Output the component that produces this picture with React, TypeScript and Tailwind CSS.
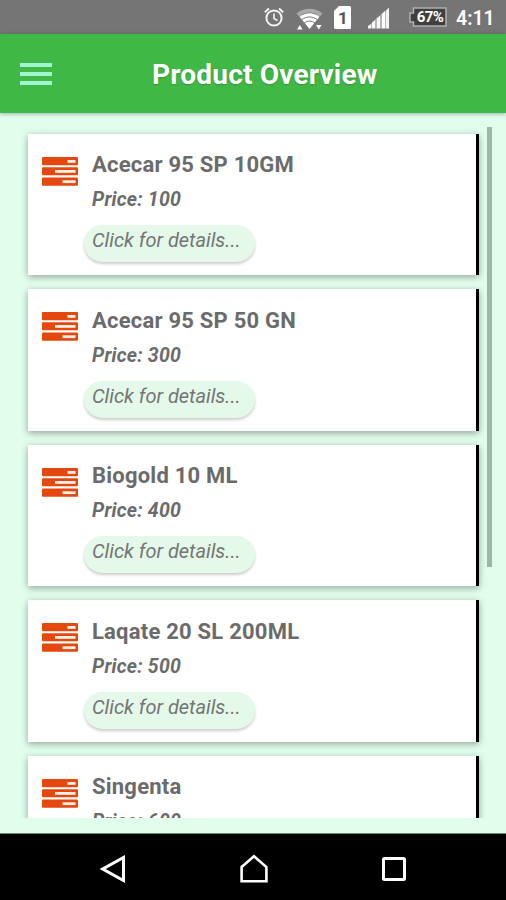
import React from "react";

interface Product {
  name: string;
  price: number;
}

const products: Product[] = [
  { name: "Acecar 95 SP 10GM", price: 100 },
  { name: "Acecar 95 SP 50 GN", price: 300 },
  { name: "Biogold 10 ML", price: 400 },
  { name: "Laqate 20 SL 200ML", price: 500 },
  { name: "Singenta", price: 600 },
];

function StatusBar() {
  return (
    <div className="flex h-[34px] shrink-0 items-center bg-[#757575] pl-[263px] text-white">
      {/* Alarm */}
      <svg className="h-[22px] w-[22px] shrink-0" viewBox="0 0 22 22" fill="none" stroke="#f4f4f4">
        <circle cx="11" cy="12" r="7.6" strokeWidth="2" />
        <path d="M11 7.5v5l3.5 2" strokeWidth="1.6" />
        <path d="M1.8 6.2 6 2.6M20.2 6.2 16 2.6" strokeWidth="2" />
      </svg>
      {/* Wifi */}
      <svg className="mt-[3px] ml-[11px] h-6 w-[27px] shrink-0" viewBox="0 0 27 24" fill="none">
        <path d="M.5 6.5C8 .3 19 .3 26.5 6.5L24 9.5C17.5 4 9.5 4 3 9.5Z" fill="#a9a9a9" />
        <path d="M3.5 9.8C9.5 5 17.5 5 23.5 9.8L13.5 22Z" fill="#fff" />
        <path d="M5.5 12.8C10.5 9 16.5 9 21.5 12.8M8 16C11.5 13.5 15.5 13.5 19 16" stroke="#757575" strokeWidth="1" />
        <path d="M1 22.5 3.8 18 6.6 22.5ZM20 18h5.6l-2.8 4.5Z" fill="#fff" />
      </svg>
      {/* Sim slot */}
      <div className="relative ml-[11px] h-[23px] w-[17px] shrink-0">
        <svg className="h-full w-full" viewBox="0 0 17 23">
          <path d="M5 0h10.5Q17 0 17 1.5v20Q17 23 15.5 23h-14Q0 23 0 21.5V5Z" fill="#fff" />
        </svg>
        <span className="absolute inset-0 pl-px text-center text-[17px] leading-[24px] font-bold text-[#555]">
          1
        </span>
      </div>
      {/* Signal */}
      <svg className="mt-[2px] ml-[17px] h-[22px] w-[22px] shrink-0" viewBox="0 0 22 22">
        <path d="M0 21.5v-2.5L3 17v4.5ZM4 21.5v-6l3-2.5v8.5ZM8.5 21.5v-10l3.5-3v13ZM18 21.5V3.5l3-3v21Z" fill="#f5f5f5" />
        <path d="M13.5 21.5V7l3.5-3v17.5Z" fill="#fff" />
        <path d="M3 21.5V17l1-1v5.5ZM7 21.5v-9l1.5-1v10ZM12 21.5V8.5l1.5-1.5v14.5ZM17 21.5V4l1-.5v18Z" fill="#b5b5b5" />
      </svg>
      {/* Battery */}
      <div className="relative ml-[19px] h-5 w-[38px] shrink-0">
        <svg className="h-full w-full" viewBox="0 0 38 20">
          <path d="M4.5 1H37v18H4.5v-4H1V6h3.5Z" fill="#3f3f3f" stroke="#b0b0b0" strokeWidth="1.5" />
        </svg>
        <span className="absolute inset-0 pl-[4px] text-center text-[15px] leading-5 font-bold tracking-[-0.6px]">
          67%
        </span>
      </div>
      <span className="ml-[9px] pt-[3px] text-[19.5px] leading-none font-semibold">4:11</span>
    </div>
  );
}

function Header() {
  return (
    <header className="z-10 flex h-[79px] shrink-0 items-center bg-[#40b846] pl-5 shadow-[0_1px_4px_rgba(0,0,0,0.3)]">
      <div className="flex w-8 flex-col gap-[5px]">
        <span className="h-1 bg-[#a2f5d0]" />
        <span className="h-1 bg-[#a2f5d0]" />
        <span className="h-1 bg-[#a2f5d0]" />
      </div>
      <h1 className="ml-[100px] pt-[3px] text-[28px] leading-8 font-bold tracking-[0.2px] whitespace-nowrap text-white [text-shadow:0_1px_2px_rgba(0,0,0,0.2)]">
        Product Overview
      </h1>
    </header>
  );
}

function TasksIcon() {
  return (
    <svg className="mt-[23px] h-[29px] w-9 shrink-0" viewBox="0 0 36 29">
      <g fill="#e4480f">
        <rect width="36" height="8.2" rx="1" />
        <rect y="10.3" width="36" height="8" rx="1" />
        <rect y="20.5" width="36" height="8.2" rx="1" />
      </g>
      <g fill="#fff0e6">
        <rect x="25.5" y="3" width="8" height="2.8" />
        <rect x="13" y="13" width="20.5" height="2.8" />
        <rect x="20.5" y="23.3" width="13" height="2.8" />
      </g>
    </svg>
  );
}

function ProductCard({ product }: { product: Product }) {
  return (
    <div className="flex h-[141.5px] shrink-0 border-r-[3px] border-black bg-white pl-[14px] shadow-[0_2px_7px_rgba(0,0,0,0.35)]">
      <TasksIcon />
      <div className="ml-[6px] pt-[18.5px]">
        <h2 className="pl-2 text-[22px] leading-[26px] font-bold tracking-[0.22px] text-[#6b6b6b]">
          {product.name}
        </h2>
        <p className="mt-[10px] pl-2 text-[19.5px] leading-6 font-bold tracking-[0.2px] text-[#6b6b6b] italic">
          Price: {product.price}
        </p>
        <button className="mt-[13px] flex h-[37px] w-[171px] rounded-full bg-[#e4f9e9] pt-[3px] pl-2 text-[20px] leading-6 tracking-[-0.03px] whitespace-nowrap text-[#757575] italic shadow-[0_2px_3px_rgba(0,0,0,0.2)]">
          Click for details...
        </button>
      </div>
    </div>
  );
}

function NavBar() {
  return (
    <nav className="flex h-[67px] shrink-0 items-center justify-between border-t border-[#718078] bg-black pt-[3px] pr-[98px] pl-[100px]">
      <svg className="h-7 w-7" viewBox="0 0 28 28" fill="none" stroke="#fff" strokeWidth="3">
        <path d="M23.5 2.5v23L2.8 14Z" />
      </svg>
      <svg className="h-8 w-8" viewBox="0 0 32 32" fill="none" stroke="#fff" strokeWidth="2.6">
        <path d="M3.6 14 16 3.3 28.4 14v14.3H3.6Z" />
      </svg>
      <svg className="h-7 w-7" viewBox="0 0 28 28" fill="none" stroke="#fff" strokeWidth="3">
        <rect x="3.5" y="3.5" width="21" height="21" rx="1" />
      </svg>
    </nav>
  );
}

export default function App() {
  return (
    <div className="flex h-[900px] w-[506px] flex-col overflow-hidden bg-[#e1fdec] font-[Roboto,sans-serif]">
      <StatusBar />
      <Header />
      <main className="flex min-h-0 flex-1 pt-[14px] pb-[15px]">
        {/* Product list */}
        <div className="flex w-[487px] flex-col gap-[14px] overflow-hidden pt-[6.5px] pr-2 pl-[28px]">
          {products.map((product) => (
            <ProductCard key={product.name} product={product} />
          ))}
        </div>
        {/* Scroll thumb */}
        <div className="h-[440px] w-[5px] bg-[#9bb5a7]" />
      </main>
      <NavBar />
    </div>
  );
}
